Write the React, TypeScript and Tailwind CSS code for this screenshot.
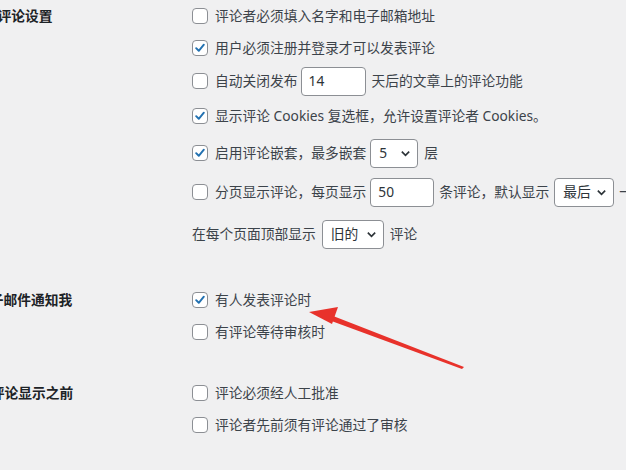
import React from 'react'

const font = { fontFamily: '"Noto Sans", "Noto Sans CJK SC", sans-serif' }

function Box({ checked }: { checked?: boolean }) {
  return (
    <span className="w-4 h-4 shrink-0 rounded-[4px] border border-[#8c8f94] bg-white flex items-center justify-center">
      {checked && (
        <svg viewBox="0 0 16 16" className="w-[14px] h-[14px]">
          <path d="M3.6 8.2 L6.6 11.2 L12.4 4.2" fill="none" stroke="#2271b1" strokeWidth="2.2" strokeLinecap="round" strokeLinejoin="round" />
        </svg>
      )}
    </span>
  )
}

function Num({ value, w }: { value: string; w: string }) {
  return (
    <span className={`${w} h-[29px] shrink-0 rounded-[4px] border border-[#8c8f94] bg-white flex items-center pl-[7px] text-[#2c3338]`}>
      {value}
    </span>
  )
}

function Sel({ value, w }: { value: string; w: string }) {
  return (
    <span className={`${w} h-[29px] shrink-0 rounded-[4px] border border-[#8c8f94] bg-white flex items-center justify-between pl-[8px] pr-[6px] text-[#2c3338]`}>
      <span>{value}</span>
      <svg viewBox="0 0 12 12" className="w-[11px] h-[11px]">
        <path d="M2 4 L6 8 L10 4" fill="none" stroke="#2c3338" strokeWidth="1.8" />
      </svg>
    </span>
  )
}

function Row({ h, children }: { h: string; children: React.ReactNode }) {
  return <div className={`${h} flex items-center gap-[7px] whitespace-nowrap`}>{children}</div>
}

function Section({ label, shift, children }: { label: string; shift: string; children: React.ReactNode }) {
  return (
    <div className="flex">
      <div className="w-[192px] shrink-0 h-[32px] flex items-center">
        <span className={`${shift} font-bold text-[#1d2327] whitespace-nowrap`}>{label}</span>
      </div>
      <div className="flex-1 min-w-0">{children}</div>
    </div>
  )
}

export default function App() {
  return (
    <div className="relative w-[626px] h-[470px] overflow-hidden bg-[#f0f0f1] text-[13.75px] text-[#3c434a]" style={font}>
      <Section label="其他评论设置" shift="ml-[-30px]">
        <Row h="h-[32px]"><Box /><span>评论者必须填入名字和电子邮箱地址</span></Row>
        <Row h="h-[32px]"><Box checked /><span>用户必须注册并登录才可以发表评论</span></Row>
        <Row h="h-[34px]">
          <Box /><span>自动关闭发布</span>
          <span className="ml-[-4px] flex items-center gap-[6px]"><Num value="14" w="w-[65px]" /><span>天后的文章上的评论功能</span></span>
        </Row>
        <Row h="h-[36px]"><Box checked /><span>显示评论 Cookies 复选框，允许设置评论者 Cookies。</span></Row>
        <Row h="h-[38px]">
          <Box checked /><span>启用评论嵌套，最多嵌套</span>
          <span className="ml-[-3px] flex items-center gap-[6px]"><Sel value="5" w="w-[48px]" /><span>层</span></span>
        </Row>
        <Row h="h-[40px]">
          <Box /><span>分页显示评论，每页显示</span>
          <span className="ml-[-3px] flex items-center gap-[5px]">
            <Num value="50" w="w-[64px]" /><span>条评论，默认显示</span><Sel value="最后" w="w-[60px]" /><span>一页</span>
          </span>
        </Row>
        <div className="h-[44px] flex items-center gap-[6px] whitespace-nowrap">
          <span>在每个页面顶部显示</span><Sel value="旧的" w="w-[62px]" /><span>评论</span>
        </div>
      </Section>

      <div className="mt-[28px]">
        <Section label="电子邮件通知我" shift="ml-[-24px]">
          <Row h="h-[32px]"><Box checked /><span>有人发表评论时</span></Row>
          <Row h="h-[32px]"><Box /><span>有评论等待审核时</span></Row>
        </Section>
      </div>

      <div className="mt-[29px]">
        <Section label="在评论显示之前" shift="ml-[-23px]">
          <Row h="h-[32px]"><Box /><span>评论必须经人工批准</span></Row>
          <Row h="h-[32px]"><Box /><span>评论者先前须有评论通过了审核</span></Row>
        </Section>
      </div>

      <svg className="absolute left-0 top-0 pointer-events-none" width="626" height="470" viewBox="0 0 626 470">
        <polygon points="328,314 464,367 462,369 326,319" fill="#e8322b" />
        <polygon points="309,312 338,307 332,324" fill="#e8322b" />
      </svg>
    </div>
  )
}
